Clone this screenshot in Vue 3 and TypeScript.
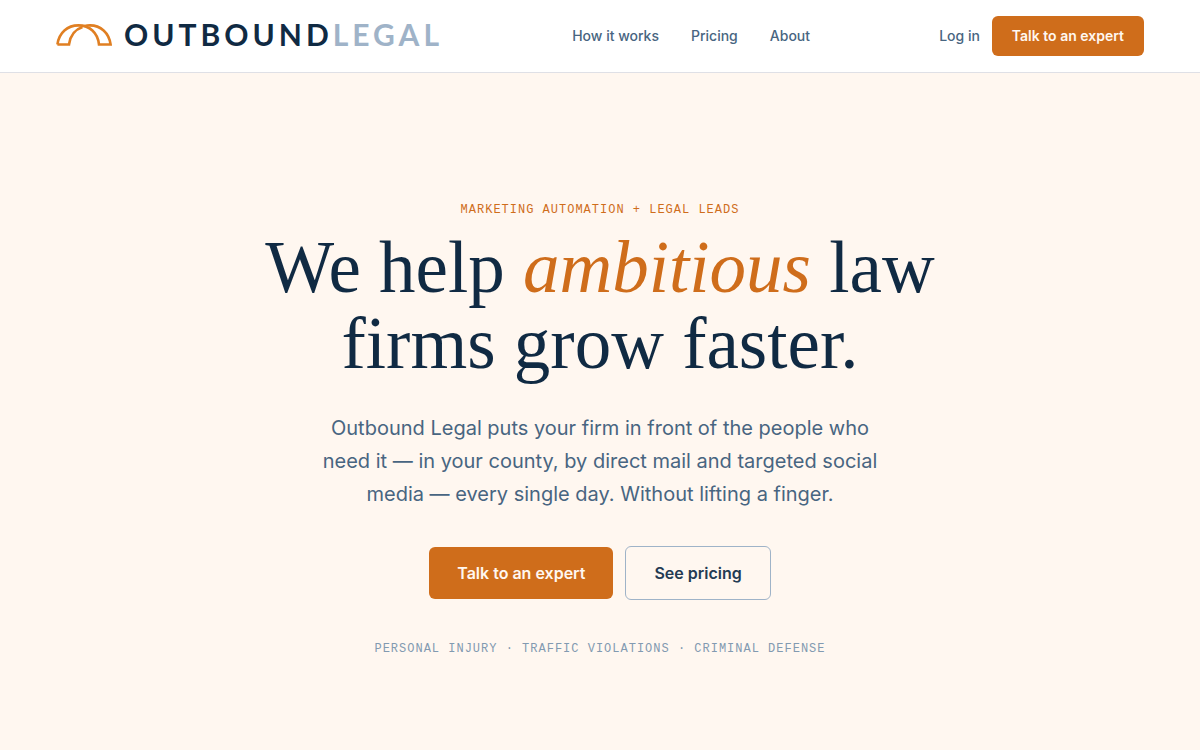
<script setup lang="ts">
interface NavLink {
  label: string
  href: string
}

const links: NavLink[] = [
  { label: 'How it works', href: '#how-it-works' },
  { label: 'Pricing', href: '#pricing' },
  { label: 'About', href: '#about' },
]

const practiceAreas: string[] = ['Personal injury', 'Traffic violations', 'Criminal defense']
</script>

<template>
  <div class="page">
    <header class="bar">
      <a class="brand" href="#" aria-label="Outbound Legal">
        <svg class="mark" viewBox="0 0 56 24" fill="none" stroke="#e07f22" stroke-width="2.6" aria-hidden="true">
          <path d="M1.4 22.5C3 10.5 11.5 3.4 22.5 3.4C33.5 3.4 41.8 10.5 43 22.5H54.6C53 10.5 44.5 3.4 34 3.4C31.8 3.4 30 3.7 28.4 4.2" />
          <path d="M1.4 22.5H13C14.2 13.8 18.6 7.6 26.5 5" />
        </svg>
        <span class="wordmark">OUTBOUND<span class="wordmark-light">LEGAL</span></span>
      </a>
      <nav class="links" aria-label="Main">
        <a v-for="link in links" :key="link.href" :href="link.href">{{ link.label }}</a>
      </nav>
      <div class="account">
        <a class="login" href="#login">Log in</a>
        <button type="button" class="button primary small">Talk to an expert</button>
      </div>
    </header>

    <main class="hero">
      <p class="eyebrow">Marketing automation + legal leads</p>
      <h1>We help <em>ambitious</em> law firms grow faster.</h1>
      <p class="lead">
        Outbound Legal puts your firm in front of the people who need it — in your county, by direct mail and
        targeted social media — every single day. Without lifting a finger.
      </p>
      <div class="actions">
        <button type="button" class="button primary">Talk to an expert</button>
        <button type="button" class="button outline">See pricing</button>
      </div>
      <p class="areas">{{ practiceAreas.join(' · ') }}</p>
    </main>
  </div>
</template>

<style>
body {
  margin: 0;
  background: #fff7f0;
}
</style>

<style scoped>
.page {
  display: flex;
  flex-direction: column;
  min-height: 100vh;
  box-sizing: border-box;
  font-family: Inter, "Liberation Sans", sans-serif;
  color: #102a43;
  background: #fff7f0;
}

.bar {
  display: flex;
  justify-content: space-between;
  align-items: center;
  padding: 16px 56px;
  background: #ffffff;
  border-bottom: 1px solid #dfe0e6;
}

.brand {
  display: flex;
  align-items: center;
  gap: 12px;
  padding-bottom: 4px;
  color: #102a43;
  text-decoration: none;
}

.mark {
  flex: none;
  width: 56px;
  height: 24px;
}

.wordmark {
  font-family: Lato, "Open Sans", sans-serif;
  font-size: 30px;
  font-weight: 700;
  line-height: 32px;
  letter-spacing: 4px;
}

.wordmark-light {
  color: #9fb3c8;
}

.links {
  display: flex;
  gap: 32px;
}

.links a,
.login {
  color: #486581;
  font-size: 14px;
  font-weight: 500;
  line-height: 20px;
  text-decoration: none;
}

.account {
  display: flex;
  align-items: center;
  justify-content: flex-end;
  gap: 12px;
}

.button {
  padding: 14px 28px;
  border: 0;
  border-radius: 6px;
  font-family: inherit;
  font-size: 16px;
  font-weight: 600;
  line-height: 24px;
  cursor: pointer;
}

.primary {
  background: #cf6d1b;
  color: #fff7f0;
}

.outline {
  border: 1px solid #9fb3c8;
  background: transparent;
  color: #243b53;
}

.small {
  padding: 10px 20px;
  font-size: 14px;
  line-height: 20px;
}

.hero {
  flex: 1;
  display: flex;
  flex-direction: column;
  align-items: center;
  padding: 128px 24px 80px;
  text-align: center;
}

.eyebrow,
.areas {
  margin: 0;
  font-family: "Liberation Mono", monospace;
  font-size: 12px;
  line-height: 18px;
  letter-spacing: 1px;
  text-transform: uppercase;
}

.eyebrow {
  color: #cf6d1b;
  font-weight: 500;
}

.areas {
  margin-top: 40px;
  color: #829ab1;
}

h1 {
  max-width: 760px;
  margin: 11px 0 0;
  font-family: "Liberation Serif", serif;
  font-size: 73px;
  font-weight: 400;
  line-height: 76px;
}

h1 em {
  color: #cf6d1b;
}

.lead {
  max-width: 560px;
  margin: 30px 0 0;
  color: #486581;
  font-size: 20px;
  line-height: 33px;
}

.actions {
  display: flex;
  align-items: center;
  gap: 12px;
  margin-top: 35px;
}
</style>
